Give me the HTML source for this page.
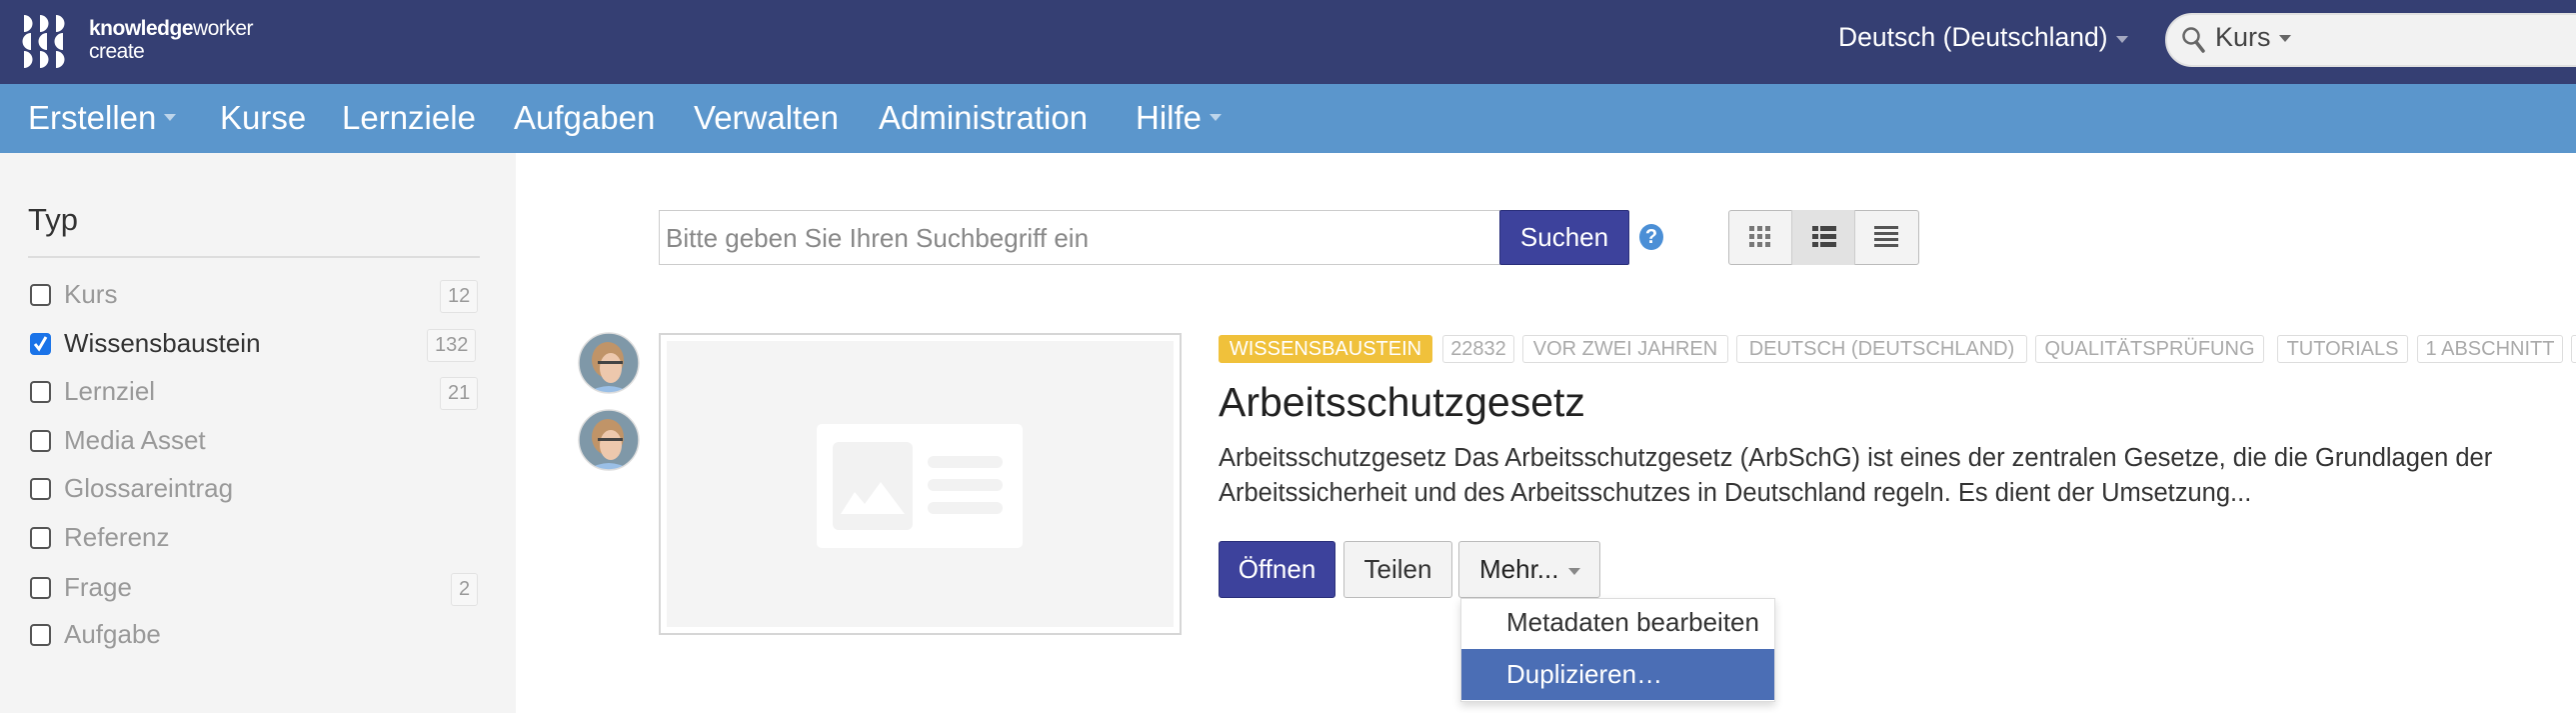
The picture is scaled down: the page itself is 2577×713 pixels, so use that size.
<!DOCTYPE html>
<html><head><meta charset="utf-8"><style>
*{margin:0;padding:0;box-sizing:border-box}
body{width:2577px;height:713px;overflow:hidden;font-family:"Liberation Sans",Arial,sans-serif;background:#fff;position:relative}
.abs{position:absolute}
.hdr{left:0;top:0;width:2577px;height:84px;background:#353f73}
.nav{left:0;top:84px;width:2577px;height:69px;background:#5b96cc}
.nav span{position:absolute;top:15px;color:#fff;font-size:33px;white-space:nowrap}
.caret{display:inline-block;width:0;height:0;border-left:6px solid transparent;border-right:6px solid transparent;border-top:7px solid rgba(255,255,255,.6);vertical-align:middle;margin-left:8px}
.side{left:0;top:153px;width:516px;height:560px;background:#f4f4f4}
.item{position:absolute;left:30px;font-size:26px;color:#999;white-space:nowrap}
.cb{position:absolute;left:0;top:5px;width:21px;height:22px;border:2px solid #555;border-radius:4px;background:#fff}
.item .t{position:absolute;left:34px;top:0}
.cnt{position:absolute;font-size:20px;color:#999;border:1px solid #e2e2e2;border-radius:3px;padding:4px 7px;background:#f7f7f7;white-space:nowrap}
.tag{position:absolute;top:335px;height:28px;font-size:20px;line-height:26px;color:#aaa;border:1px solid #ddd;border-radius:3px;padding:0 4px;white-space:nowrap;text-align:center;overflow:hidden}
.btn{position:absolute;top:541px;height:57px;font-size:26px;line-height:55px;text-align:center;border:1px solid #bbb;border-radius:3px;background:#f3f3f3;color:#333}
</style></head><body>
<div class="abs hdr"></div>
<svg class="abs" style="left:22px;top:14px" width="50" height="54" viewBox="0 0 50 54">
<g fill="#fff">
<path d="M2 1 A8.5 8.5 0 0 1 2 18 Z"/><path d="M9 19 A8.5 8.5 0 0 0 9 36 Z"/><path d="M2 37 A8.5 8.5 0 0 1 2 54 Z"/>
<path d="M18 1 A8.5 8.5 0 0 1 18 18 Z"/><path d="M25 19 A8.5 8.5 0 0 0 25 36 Z"/><path d="M18 37 A8.5 8.5 0 0 1 18 54 Z"/>
<path d="M34 1 A8.5 8.5 0 0 1 34 18 Z"/><path d="M41 19 A8.5 8.5 0 0 0 41 36 Z"/><path d="M34 37 A8.5 8.5 0 0 1 34 54 Z"/>
</g></svg>
<div class="abs" style="left:89px;top:17px;color:#fff;font-size:21px;line-height:23px;letter-spacing:-0.5px"><b style="font-weight:600">knowledge</b>worker<br>create</div>
<div class="abs" style="left:1839px;top:22px;color:#fff;font-size:26.5px;white-space:nowrap">Deutsch (Deutschland)<span class="caret" style="border-top-color:rgba(255,255,255,.55)"></span></div>
<div class="abs" style="left:2166px;top:13px;width:440px;height:54px;border-radius:27px;background:#f2f2f2;border:2px solid #e0e0e0"></div>
<svg class="abs" style="left:2182px;top:26px" width="26" height="28" viewBox="0 0 26 28"><circle cx="10" cy="10" r="7.5" fill="none" stroke="#666" stroke-width="2.5"/><path d="M15 16 L22 25" stroke="#666" stroke-width="3.5" stroke-linecap="round"/></svg>
<div class="abs" style="left:2216px;top:22px;color:#444;font-size:27px">Kurs<span class="caret" style="border-top-color:#666"></span></div>

<div class="abs nav">
<span style="left:28px">Erstellen<span class="caret"></span></span>
<span style="left:220px">Kurse</span>
<span style="left:342px">Lernziele</span>
<span style="left:514px">Aufgaben</span>
<span style="left:694px">Verwalten</span>
<span style="left:879px">Administration</span>
<span style="left:1136px">Hilfe<span class="caret"></span></span>
</div>

<div class="abs side"></div>
<div class="abs" style="left:28px;top:202px;font-size:31px;color:#333">Typ</div>
<div class="abs" style="left:28px;top:256px;width:452px;height:2px;background:#ddd"></div>
<div class="item" style="top:279px"><div class="cb"></div><span class="t">Kurs</span></div>
<div class="item" style="top:328px"><div class="cb" style="background:#1a73e8;border-color:#1a73e8"><svg width="17" height="18" viewBox="0 0 17 18" style="position:absolute;left:0;top:0"><path d="M3 9 L7 14 L14 2" stroke="#fff" stroke-width="3" fill="none"/></svg></div><span class="t" style="color:#333">Wissensbaustein</span></div>
<div class="item" style="top:376px"><div class="cb"></div><span class="t">Lernziel</span></div>
<div class="item" style="top:425px"><div class="cb"></div><span class="t">Media Asset</span></div>
<div class="item" style="top:473px"><div class="cb"></div><span class="t">Glossareintrag</span></div>
<div class="item" style="top:522px"><div class="cb"></div><span class="t">Referenz</span></div>
<div class="item" style="top:572px"><div class="cb"></div><span class="t">Frage</span></div>
<div class="item" style="top:619px"><div class="cb"></div><span class="t">Aufgabe</span></div>
<div class="cnt" style="top:280px;left:440px">12</div>
<div class="cnt" style="top:329px;left:427px">132</div>
<div class="cnt" style="top:377px;left:440px">21</div>
<div class="cnt" style="top:573px;left:451px">2</div>

<div class="abs" style="left:659px;top:210px;width:842px;height:55px;border:1px solid #ccc;font-size:26px;color:#888;padding:12px 6px">Bitte geben Sie Ihren Suchbegriff ein</div>
<div class="abs" style="left:1500px;top:210px;width:130px;height:55px;background:#3d429c;border:1px solid #2a2f7a;border-radius:2px;color:#fff;font-size:26px;text-align:center;line-height:53px">Suchen</div>
<div class="abs" style="left:1640px;top:224px;width:24px;height:26px;border-radius:50%;background:#4b8fd6;color:#fff;font-size:20px;font-weight:bold;text-align:center;line-height:26px">?</div>
<div class="abs" style="left:1729px;top:210px;width:191px;height:55px;border:1px solid #bbb;border-radius:3px;background:#f3f3f3"></div>
<div class="abs" style="left:1792px;top:210px;width:64px;height:55px;background:#e2e2e2;border-left:1px solid #ccc;border-right:1px solid #ccc"></div>
<svg class="abs" style="left:1750px;top:226px" width="22" height="22"><g fill="#777"><rect x="0" y="0" width="5" height="5"/><rect x="8" y="0" width="5" height="5"/><rect x="16" y="0" width="5" height="5"/><rect x="0" y="8" width="5" height="5"/><rect x="8" y="8" width="5" height="5"/><rect x="16" y="8" width="5" height="5"/><rect x="0" y="16" width="5" height="5"/><rect x="8" y="16" width="5" height="5"/><rect x="16" y="16" width="5" height="5"/></g></svg>
<svg class="abs" style="left:1813px;top:226px" width="24" height="22"><g fill="#444"><rect x="0" y="0" width="6" height="5"/><rect x="8" y="0" width="16" height="5"/><rect x="0" y="8" width="6" height="5"/><rect x="8" y="8" width="16" height="5"/><rect x="0" y="16" width="6" height="5"/><rect x="8" y="16" width="16" height="5"/></g></svg>
<svg class="abs" style="left:1875px;top:226px" width="24" height="22"><g fill="#555"><rect y="0" width="24" height="3"/><rect y="6" width="24" height="3"/><rect y="12" width="24" height="3"/><rect y="18" width="24" height="3"/></g></svg>

<svg class="abs" style="left:578px;top:332px" width="62" height="142" viewBox="0 0 62 142">
<defs><clipPath id="c1"><circle cx="31" cy="31" r="30"/></clipPath><clipPath id="c2"><circle cx="31" cy="108" r="30"/></clipPath></defs>
<g clip-path="url(#c1)"><rect width="62" height="62" fill="#7f98a8"/><ellipse cx="30" cy="28" rx="16" ry="18" fill="#c09468"/><ellipse cx="33" cy="36" rx="11" ry="15" fill="#edc8ad"/><rect x="20" y="29" width="25" height="3" fill="#444"/><path d="M8 62 Q31 46 54 62Z" fill="#9abfe6"/></g>
<circle cx="31" cy="31" r="30" fill="none" stroke="#ddd" stroke-width="1.5"/>
<g clip-path="url(#c2)"><rect y="77" width="62" height="62" fill="#7f98a8"/><ellipse cx="30" cy="105" rx="16" ry="18" fill="#c09468"/><ellipse cx="33" cy="113" rx="11" ry="15" fill="#edc8ad"/><rect x="20" y="106" width="25" height="3" fill="#444"/><path d="M8 139 Q31 123 54 139Z" fill="#9abfe6"/></g>
<circle cx="31" cy="108" r="30" fill="none" stroke="#ddd" stroke-width="1.5"/>
</svg>

<div class="abs" style="left:659px;top:333px;width:523px;height:302px;border:2px solid #d6d6d6;background:#fff;padding:6px"><div style="width:100%;height:100%;background:#f4f4f4"></div></div>
<svg class="abs" style="left:815px;top:422px" width="210" height="128" viewBox="0 0 210 128">
<rect x="2" y="2" width="206" height="124" rx="5" fill="#fff"/>
<rect x="18" y="20" width="80" height="88" rx="6" fill="#f2f2f2"/>
<path d="M26 92 L40 70 L50 82 L66 60 L90 92Z" fill="#fff"/>
<rect x="113" y="34" width="75" height="12" rx="6" fill="#f2f2f2"/>
<rect x="113" y="57" width="75" height="12" rx="6" fill="#f2f2f2"/>
<rect x="113" y="80" width="75" height="12" rx="6" fill="#f2f2f2"/>
</svg>

<div class="tag" style="left:1219px;width:214px;background:#f0c13b;border-color:#f0c13b;color:#fff">WISSENSBAUSTEIN</div>
<div class="tag" style="left:1443px;width:72px">22832</div>
<div class="tag" style="left:1523px;width:206px">VOR ZWEI JAHREN</div>
<div class="tag" style="left:1737px;width:291px">DEUTSCH (DEUTSCHLAND)</div>
<div class="tag" style="left:2036px;width:229px">QUALITÄTSPRÜFUNG</div>
<div class="tag" style="left:2278px;width:131px">TUTORIALS</div>
<div class="tag" style="left:2418px;width:146px">1 ABSCHNITT</div>
<div class="tag" style="left:2572px;width:30px"></div>

<div class="abs" style="left:1219px;top:379px;font-size:41px;color:#222;white-space:nowrap">Arbeitsschutzgesetz</div>
<div class="abs" style="left:1219px;top:441px;font-size:25.5px;line-height:35px;color:#333;width:1350px">Arbeitsschutzgesetz Das Arbeitsschutzgesetz (ArbSchG) ist eines der zentralen Gesetze, die die Grundlagen der<br>Arbeitssicherheit und des Arbeitsschutzes in Deutschland regeln. Es dient der Umsetzung...</div>

<div class="btn" style="left:1219px;width:117px;background:#3d429c;border-color:#2a2f7a;color:#fff">Öffnen</div>
<div class="btn" style="left:1344px;width:109px">Teilen</div>
<div class="btn" style="left:1459px;width:142px;text-align:left;padding-left:20px;color:#222">Mehr...<span class="caret" style="border-top-color:#888;margin-left:10px"></span></div>
<div class="abs" style="left:1461px;top:598px;width:315px;height:104px;background:#fff;border:1px solid #ddd;box-shadow:0 4px 8px rgba(0,0,0,.15)"></div>
<div class="abs" style="left:1507px;top:607px;font-size:26px;color:#333">Metadaten bearbeiten</div>
<div class="abs" style="left:1462px;top:649px;width:313px;height:51px;background:#4b6eb5"></div>
<div class="abs" style="left:1507px;top:659px;font-size:26px;color:#fff">Duplizieren…</div>
</body></html>
